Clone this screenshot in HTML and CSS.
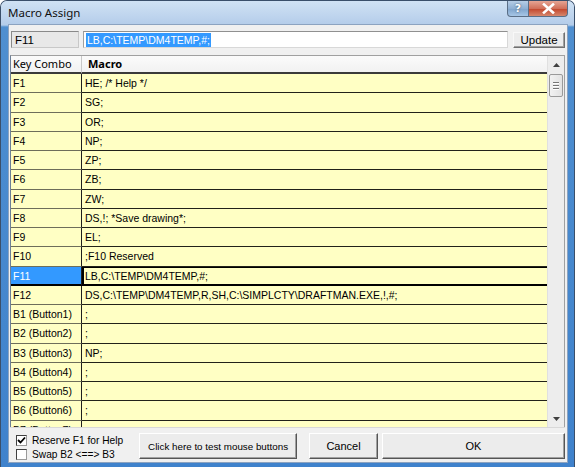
FILE: index.html
```html
<!DOCTYPE html>
<html>
<head>
<meta charset="utf-8">
<link rel="stylesheet" href="styles.css">
</head>
<body>
<div class="window">
  <div class="titlebar">
    <span class="title">Macro Assign</span>
    <div class="caption-btns">
      <span class="cbtn help">?</span>
      <span class="cbtn close"><svg width="13" height="11" viewBox="0 0 13 11"><path d="M2 1.5 L11 9.5 M11 1.5 L2 9.5" stroke="#fff" stroke-width="2.6" stroke-linecap="square"/></svg></span>
    </div>
  </div>
  <div class="client">
    <div class="toprow">
      <div class="keybox">F11</div>
      <div class="textfield"><span class="sel">LB,C:\TEMP\DM4TEMP,#;</span></div>
      <div class="btn update">Update</div>
    </div>
    <div class="grid">
      <div class="gridmain">
        <div class="row head">
          <div class="k">Key Combo</div>
          <div class="m">Macro</div>
        </div>
        <div class="rows">
          <div class="row"><div class="k">F1</div><div class="m">HE; /* Help */</div></div>
          <div class="row"><div class="k">F2</div><div class="m">SG;</div></div>
          <div class="row"><div class="k">F3</div><div class="m">OR;</div></div>
          <div class="row"><div class="k">F4</div><div class="m">NP;</div></div>
          <div class="row"><div class="k">F5</div><div class="m">ZP;</div></div>
          <div class="row"><div class="k">F6</div><div class="m">ZB;</div></div>
          <div class="row"><div class="k">F7</div><div class="m">ZW;</div></div>
          <div class="row"><div class="k">F8</div><div class="m">DS,!; *Save drawing*;</div></div>
          <div class="row"><div class="k">F9</div><div class="m">EL;</div></div>
          <div class="row"><div class="k">F10</div><div class="m">;F10 Reserved</div></div>
          <div class="row cur"><div class="k">F11</div><div class="m">LB,C:\TEMP\DM4TEMP,#;</div></div>
          <div class="row"><div class="k">F12</div><div class="m">DS,C:\TEMP\DM4TEMP,R,SH,C:\SIMPLCTY\DRAFTMAN.EXE,!,#;</div></div>
          <div class="row"><div class="k">B1 (Button1)</div><div class="m">;</div></div>
          <div class="row"><div class="k">B2 (Button2)</div><div class="m">;</div></div>
          <div class="row"><div class="k">B3 (Button3)</div><div class="m">NP;</div></div>
          <div class="row"><div class="k">B4 (Button4)</div><div class="m">;</div></div>
          <div class="row"><div class="k">B5 (Button5)</div><div class="m">;</div></div>
          <div class="row"><div class="k">B6 (Button6)</div><div class="m">;</div></div>
          <div class="row"><div class="k">B7 (Button7)</div><div class="m">;</div></div>
        </div>
      </div>
      <div class="scrollbar">
        <div class="arrow up"><svg width="7" height="4" viewBox="0 0 7 4"><path d="M0 4 L3.5 0 L7 4 Z" fill="#404040"/></svg></div>
        <div class="thumb"><span></span><span></span><span></span></div>
        <div class="track"></div>
        <div class="arrow down"><svg width="7" height="4" viewBox="0 0 7 4"><path d="M0 0 L3.5 4 L7 0 Z" fill="#404040"/></svg></div>
      </div>
    </div>
    <div class="bottom">
      <div class="checks">
        <label class="chk"><span class="box"><svg width="9" height="9" viewBox="0 0 9 9"><path d="M1 4 L3.5 6.5 L8 1.5" stroke="#000" stroke-width="1.8" fill="none"/></svg></span>Reserve F1 for Help</label>
        <label class="chk"><span class="box"></span>Swap B2 &lt;==&gt; B3</label>
      </div>
      <div class="btn test">Click here to test mouse buttons</div>
      <div class="btn cancel">Cancel</div>
      <div class="btn ok">OK</div>
    </div>
  </div>
</div>
</body>
</html>
```

FILE: styles.css
```css
html, body {
  margin: 0;
  padding: 0;
  background: #ffffff;
}
.window {
  width: 575px;
  height: 467px;
  box-sizing: border-box;
  border: 1px solid #3a4f6a;
  border-bottom: none;
  border-radius: 7px 7px 0 0;
  background: linear-gradient(to bottom, #c2d8ee 0px, #b4cdea 24px, #4f8fd0 26px, #3f82cc 100%);
  padding: 0 6px 4px 7px;
  display: flex;
  flex-direction: column;
  font-family: "Liberation Sans", Arial, sans-serif;
  overflow: hidden;
}
.titlebar {
  height: 23px;
  flex: none;
  display: flex;
  align-items: flex-start;
  justify-content: space-between;
  background: linear-gradient(to bottom, #d0e2f4, #b5cdea);
  margin: 0 -6px 0 -7px;
  padding: 0 6px 0 7px;
}
.title {
  font-family: "Noto Sans", "Open Sans", sans-serif;
  font-size: 11.5px;
  color: #101010;
  margin-top: 4px;
}
.caption-btns {
  display: flex;
}
.cbtn {
  height: 16px;
  box-sizing: border-box;
  display: flex;
  align-items: center;
  justify-content: center;
  border: 1px solid #5a6e86;
  border-top: none;
}
.help {
  width: 22px;
  border-radius: 0 0 0 4px;
  background: linear-gradient(to bottom, #b6cde6, #8fb0d4 50%, #7ea3cb 51%, #a7c6e6);
  color: #fff;
  font-family: "DejaVu Sans", sans-serif;
  font-weight: bold;
  font-size: 11px;
  text-shadow: 0 0 2px #345;
}
.close {
  width: 39px;
  border-left: none;
  border-radius: 0 0 4px 0;
  background: linear-gradient(to bottom, #e6a594, #d1705a 50%, #c2442a 51%, #d6876d);
}
.client {
  flex: 1;
  background: #f0f0f0;
  border: 1px solid #8ca3c0;
  display: flex;
  flex-direction: column;
  padding: 6px 2px 0 1px;
  overflow: hidden;
}
.toprow {
  display: flex;
  height: 17px;
  margin-left: 1px;
}
.keybox {
  width: 68px;
  box-sizing: border-box;
  background: #e8e8e8;
  border: 1px solid #c8c8c8;
  border-top-color: #8a8a8a;
  border-left-color: #8a8a8a;
  padding: 1px 0 0 3px;
  color: #000;
  font-family: "Liberation Sans", Arial, sans-serif;
  font-size: 11.5px;
  line-height: 14px;
}
.textfield {
  flex: 1;
  margin-left: 4px;
  box-sizing: border-box;
  background: #fff;
  border: 1px solid #d8d8d8;
  border-top-color: #909090;
  border-left-color: #a0a0a0;
  padding: 1px 0 0 2px;
  font-family: "Liberation Sans", Arial, sans-serif;
  font-size: 10.5px;
  line-height: 14px;
}
.sel {
  background: #3399ff;
  color: #fff;
  display: inline-block;
  padding: 0 1px;
}
.btn {
  box-sizing: border-box;
  background: #ececec;
  border: 1px solid #fff;
  border-right-color: #555;
  border-bottom-color: #555;
  box-shadow: inset -1px -1px 0 #a0a0a0;
  display: flex;
  align-items: center;
  justify-content: center;
  font-family: "Liberation Sans", Arial, sans-serif;
  font-size: 11px;
  color: #000;
}
.update {
  width: 52px;
  margin-left: 5px;
  margin-top: 1px;
  height: 16px;
  font-size: 11.5px;
  border: 1px solid #707070;
  border-top-color: #f8f8f8;
  border-left-color: #f8f8f8;
}
.grid {
  margin-top: 7px;
  height: 371px;
  flex: none;
  display: flex;
  border: 1px solid #a0a0a0;
  border-left-color: #6d7f95;
  border-bottom: none;
  background: #f0f0f0;
  overflow: hidden;
}
.gridmain {
  flex: 1;
  display: flex;
  flex-direction: column;
  overflow: hidden;
}
.row {
  display: flex;
  height: 19.25px;
  flex: none;
  box-sizing: border-box;
  background: #ffffc4;
  font-family: "Liberation Sans", Arial, sans-serif;
  font-size: 10.5px;
  line-height: 18px;
  color: #000;
}
.row .k {
  width: 71px;
  box-sizing: border-box;
  border-right: 1px solid #1e1e1e;
  border-bottom: 1px solid #6e6e5a;
  padding-left: 2px;
  white-space: nowrap;
  overflow: hidden;
}
.row .m {
  flex: 1;
  box-sizing: border-box;
  border-bottom: 1px solid #22221a;
  padding-left: 3px;
  white-space: nowrap;
  overflow: hidden;
}
.row.head {
  height: 18px;
  background: linear-gradient(to bottom, #fbfbfb, #f0f0f0);
  line-height: 16px;
}
.row.head .k {
  border-right: 1px solid #c8c8c8;
  border-bottom: 2px solid #3a3a3a;
  font-family: "Noto Sans", sans-serif;
  font-size: 11px;
  padding-left: 2px;
}
.row.head .m {
  border-bottom: 2px solid #3a3a3a;
  font-family: "Noto Sans", sans-serif;
  font-weight: bold;
  font-size: 11px;
  padding-left: 6px;
}
.rows {
  display: flex;
  flex-direction: column;
}
.row.cur .k {
  background: #3399ff;
  color: #fff;
  border-bottom: 2px solid #000;
}
.row.cur .m {
  border-bottom: 2px solid #000;
  box-shadow: inset 2px 0 0 #000, inset 0 1px 0 #000;
}
.scrollbar {
  width: 16px;
  flex: none;
  display: flex;
  flex-direction: column;
  background: #ededed;
  border-left: 1px solid #e0e0e0;
}
.arrow {
  height: 17px;
  display: flex;
  align-items: center;
  justify-content: center;
}
.thumb {
  margin: 1px 1px 0 1px;
  height: 23px;
  box-sizing: border-box;
  border: 1px solid #9a9a9a;
  border-radius: 2px;
  background: linear-gradient(to right, #f2f2f2, #e2e2e2);
  display: flex;
  flex-direction: column;
  align-items: center;
  justify-content: center;
  gap: 1px;
}
.thumb span {
  width: 6px;
  height: 1px;
  background: #777;
  border-bottom: 1px solid #fff;
}
.track {
  flex: 1;
}
.bottom {
  flex: 1;
  display: flex;
  align-items: flex-start;
  padding-top: 5px;
  border-top: 1px solid #d8d8d8;
}
.checks {
  width: 124px;
  padding-left: 6px;
  display: flex;
  flex-direction: column;
  gap: 2px;
  margin-top: 1px;
}
.chk {
  display: flex;
  align-items: center;
  font-family: "Liberation Sans", Arial, sans-serif;
  font-size: 10.2px;
  color: #000;
  height: 12px;
  white-space: nowrap;
}
.box {
  width: 11px;
  height: 11px;
  flex: none;
  box-sizing: border-box;
  background: #fff;
  border: 1px solid #9a9a9a;
  border-top-color: #404040;
  border-left-color: #404040;
  margin-right: 5px;
  display: flex;
  align-items: center;
  justify-content: center;
}
.test {
  width: 160px;
  height: 26px;
  font-size: 9.8px;
}
.cancel {
  width: 69px;
  height: 26px;
  margin-left: 12px;
}
.ok {
  width: 185px;
  height: 26px;
  margin-left: 4px;
}
```
